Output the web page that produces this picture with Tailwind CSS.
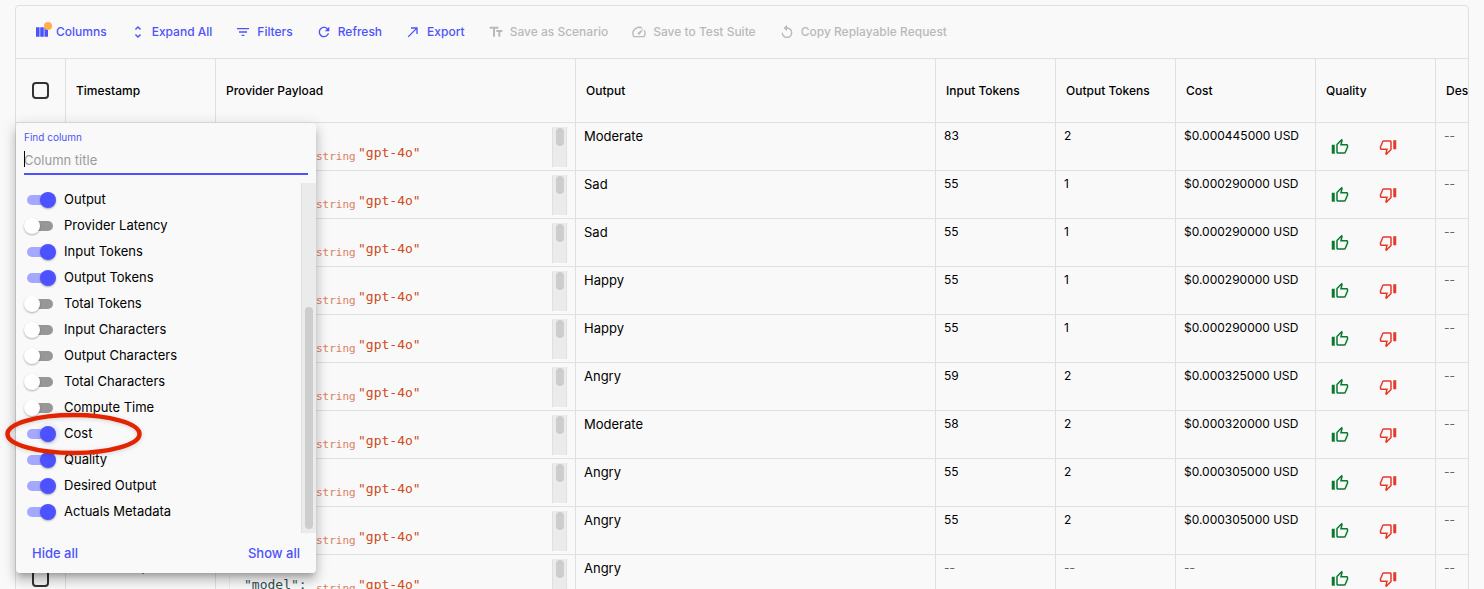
<!DOCTYPE html>
<html lang="en">
<head>
  <meta charset="UTF-8" />
  <meta name="viewport" content="width=device-width, initial-scale=1" />
  <title>Inferences</title>
  <script src="https://cdn.jsdelivr.net/npm/@tailwindcss/browser@4"></script>
</head>
<body class="h-screen overflow-hidden bg-[#f9f9f9] font-[Inter,sans-serif] text-[13px] leading-5 text-black">
  <!-- icon sprite -->
  <svg class="hidden">
    <symbol id="i-columns" viewBox="0 0 24 24"><path d="M14.67 5v14H9.33V5h5.34zm1 14H21V5h-5.33v14zm-7.34 0V5H3v14h5.33z"/></symbol>
    <symbol id="i-unfold" viewBox="0 0 24 24"><path d="M12 5.83 15.17 9l1.41-1.41L12 3 7.41 7.59 8.83 9 12 5.83zm0 12.34L8.83 15l-1.41 1.41L12 21l4.59-4.59L15.17 15 12 18.17z"/></symbol>
    <symbol id="i-filter" viewBox="0 0 24 24"><path d="M10 18h4v-2h-4v2zM3 6v2h18V6H3zm3 7h12v-2H6v2z"/></symbol>
    <symbol id="i-refresh" viewBox="0 0 24 24"><path d="M17.65 6.35C16.2 4.9 14.21 4 12 4c-4.42 0-7.99 3.58-7.99 8s3.57 8 7.99 8c3.73 0 6.84-2.55 7.73-6h-2.08c-.82 2.33-3.04 4-5.65 4-3.31 0-6-2.69-6-6s2.69-6 6-6c1.66 0 3.14.69 4.22 1.78L13 11h7V4l-2.35 2.35z"/></symbol>
    <symbol id="i-export" viewBox="0 0 24 24"><path d="M9 5v2h6.59L4 18.59 5.41 20 17 8.41V15h2V5z"/></symbol>
    <symbol id="i-text" viewBox="0 0 24 24"><path d="M2.5 4v3h5v12h3V7h5V4h-13zm19 5h-9v3h3v7h3v-7h3V9z"/></symbol>
    <symbol id="i-speed" viewBox="0 0 24 24"><path d="m20.38 8.57-1.23 1.85a8 8 0 0 1-.22 7.58H5.07A8 8 0 0 1 15.58 6.85l1.85-1.23A10 10 0 0 0 3.35 19a2 2 0 0 0 1.72 1h13.85a2 2 0 0 0 1.74-1 10 10 0 0 0-.27-10.44zm-9.79 6.84a2 2 0 0 0 2.83 0l5.66-8.49-8.49 5.66a2 2 0 0 0 0 2.83z"/></symbol>
    <symbol id="i-replay" viewBox="0 0 24 24"><path d="M12 5V1L7 6l5 5V7c3.31 0 6 2.69 6 6s-2.69 6-6 6-6-2.69-6-6H4c0 4.42 3.58 8 8 8s8-3.58 8-8-3.58-8-8-8z"/></symbol>
    <symbol id="i-up" viewBox="0 0 24 24"><path d="M9 21h9c.83 0 1.54-.5 1.84-1.22l3.02-7.05c.09-.23.14-.47.14-.73v-2c0-1.1-.9-2-2-2h-6.31l.95-4.57.03-.32c0-.41-.17-.79-.44-1.06L14.17 1 7.58 7.59C7.22 7.95 7 8.45 7 9v10c0 1.1.9 2 2 2zM9 9l4.34-4.34L12 10h9v2l-3 7H9V9zM1 9h4v12H1z"/></symbol>
    <symbol id="i-down" viewBox="0 0 24 24"><path d="M15 3H6c-.83 0-1.54.5-1.84 1.22l-3.02 7.05c-.09.23-.14.47-.14.73v2c0 1.1.9 2 2 2h6.31l-.95 4.57-.03.32c0 .41.17.79.44 1.06L9.83 23l6.59-6.59c.36-.36.58-.86.58-1.41V5c0-1.1-.9-2-2-2zm0 12-4.34 4.34L12 14H3v-2l3-7h9v10zm4-12h4v12h-4z"/></symbol>
  </svg>

  <main class="relative mt-[5px] mr-[15px] ml-[15px]">
    <div class="overflow-hidden rounded border border-[#e0e0e0]">
      <div class="flex h-[53px] items-center gap-[23px] border-b border-[#e0e0e0] pl-[18px] text-xs whitespace-nowrap text-[#4d53fa]">
        <button class="flex items-center gap-1.5 font-medium">
          <span class="relative">
            <svg class="size-4 fill-current"><use href="#i-columns"/></svg>
            <span class="absolute -top-0.5 -right-0.5 size-2 rounded-full bg-[#ffb04c]"></span>
          </span>
          Columns
        </button>
        <button class="flex items-center gap-1.5 font-medium"><svg class="size-4 fill-current"><use href="#i-unfold"/></svg>Expand All</button>
        <button class="flex items-center gap-1.5 font-medium"><svg class="size-4 fill-current"><use href="#i-filter"/></svg>Filters</button>
        <button class="flex items-center gap-1.5 font-medium"><svg class="size-4 fill-current"><use href="#i-refresh"/></svg>Refresh</button>
        <button class="flex items-center gap-1.5 font-medium"><svg class="size-4 fill-current"><use href="#i-export"/></svg>Export</button>
        <button disabled class="flex items-center gap-1.5 font-medium text-[#b9b9b9]"><svg class="size-4 fill-current"><use href="#i-text"/></svg>Save as Scenario</button>
        <button disabled class="flex items-center gap-1.5 font-medium text-[#b9b9b9]"><svg class="size-4 fill-current"><use href="#i-speed"/></svg>Save to Test Suite</button>
        <button disabled class="flex items-center gap-1.5 font-medium text-[#b9b9b9]"><svg class="size-4 fill-current"><use href="#i-replay"/></svg>Copy Replayable Request</button>
      </div>

      <table class="w-[1620px] table-fixed border-separate border-spacing-0 text-left">
        <colgroup>
          <col class="w-[50px]" /><col class="w-[150px]" /><col class="w-[360px]" /><col class="w-[360px]" />
          <col class="w-[120px]" /><col class="w-[120px]" /><col class="w-[140px]" /><col class="w-[120px]" /><col />
        </colgroup>
        <thead>
          <tr class="h-16 *:border-r *:border-b *:border-[#e0e0e0] *:px-2.5 *:text-xs *:font-medium">
            <th><input type="checkbox" aria-label="Select all" class="ml-1.5 block size-[17px] appearance-none rounded-sm border-2 border-[#333]" /></th>
            <th>Timestamp</th>
            <th>Provider Payload</th>
            <th>Output</th>
            <th>Input Tokens</th>
            <th>Output Tokens</th>
            <th>Cost</th>
            <th>Quality</th>
            <th>Desired Output</th>
          </tr>
        </thead>
        <tbody id="rows"></tbody>
      </table>
    </div>

    <!-- column picker -->
    <section class="absolute top-[118px] left-px w-[300px] rounded bg-[#f9f9f9] shadow-[0_5px_5px_-3px_rgba(0,0,0,0.2),0_8px_10px_1px_rgba(0,0,0,0.14),0_3px_14px_2px_rgba(0,0,0,0.12)]">
      <div class="px-2 pt-2">
        <label for="find" class="block text-[10px] leading-3 text-[#4d53fa]">Find column</label>
        <div class="relative">
          <input id="find" type="text" placeholder="Column title" class="block h-8 w-full border-b-2 border-[#4d53fa] pt-1 caret-transparent outline-none placeholder:text-[#9b9b9b]" />
          <span class="absolute top-2 left-0 h-4 w-px bg-black"></span>
        </div>
      </div>
      <div class="mt-2 flex h-[350px]">
        <div id="columns" class="flex-1 pt-1 pl-2"></div>
        <div class="w-[15px] border-l border-[#e0e0e0] bg-[#ebebeb] pt-[124px]">
          <div class="mx-auto h-[222px] w-2 rounded-full bg-[#cdcdcd]"></div>
        </div>
      </div>
      <div class="flex h-10 items-center justify-between px-4 font-medium text-[#4d53fa]">
        <button>Hide all</button>
        <button>Show all</button>
      </div>
    </section>

    <!-- highlight around the Cost switch -->
    <svg class="pointer-events-none absolute top-[404px] -left-[13px] h-[50px] w-[144px] drop-shadow-sm" viewBox="0 0 144 50">
      <ellipse cx="71.5" cy="25" rx="66" ry="19" fill="none" stroke="#e32400" stroke-width="4.5"/>
    </svg>
  </main>

  <script>
    const rows = [
      ['Moderate', '83', '2', '$0.000445000 USD'],
      ['Sad', '55', '1', '$0.000290000 USD'],
      ['Sad', '55', '1', '$0.000290000 USD'],
      ['Happy', '55', '1', '$0.000290000 USD'],
      ['Happy', '55', '1', '$0.000290000 USD'],
      ['Angry', '59', '2', '$0.000325000 USD'],
      ['Moderate', '58', '2', '$0.000320000 USD'],
      ['Angry', '55', '2', '$0.000305000 USD'],
      ['Angry', '55', '2', '$0.000305000 USD'],
      ['Angry', '--', '--', '--'],
    ];

    const columns = [
      ['Output', true],
      ['Provider Latency', false],
      ['Input Tokens', true],
      ['Output Tokens', true],
      ['Total Tokens', false],
      ['Input Characters', false],
      ['Output Characters', false],
      ['Total Characters', false],
      ['Compute Time', false],
      ['Cost', true],
      ['Quality', true],
      ['Desired Output', true],
      ['Actuals Metadata', true],
    ];

    // Missing values are drawn in grey
    const value = (v) => v === '--' ? '<span class="text-[#666]">--</span>' : v;

    document.getElementById('rows').innerHTML = rows.map(([output, input, out, cost]) => `
      <tr class="h-12 *:h-12 *:border-r *:border-b *:border-[#e0e0e0] *:px-2 *:py-0 *:align-top">
        <td><input type="checkbox" aria-label="Select row" class="mt-[15px] ml-2 block size-[17px] appearance-none rounded-sm border-2 border-[#333]" /></td>
        <td class="text-xs"><div class="pt-[5px]">2024-09-13, 4:28</div></td>
        <td>
          <div class="mt-1 flex h-10 overflow-hidden font-['DejaVu_Sans_Mono',monospace]">
            <div class="flex-1 pl-[5px]">
              <div class="h-4 pl-2 leading-4 text-[#2f4f4f]">{</div>
              <div class="flex items-baseline border-l border-[#ebebeb] pl-3.5 leading-5">
                <span class="w-[72px] text-[#2f4f4f]">"model":</span>
                <span class="relative top-[3px] w-[42px] text-[11px] text-[#dc7f5b]">string</span>
                <span class="text-[#cb4b16]">"gpt-4o"</span>
              </div>
            </div>
            <div class="w-[15px] border-x border-[#e0e0e0] bg-[#ebebeb] pt-px"><div class="mx-auto h-[18px] w-2 rounded-full bg-[#cdcdcd]"></div></div>
          </div>
        </td>
        <td><div class="pt-[3px]">${output}</div></td>
        <td class="text-xs"><div class="pt-[3px] leading-5">${value(input)}</div></td>
        <td class="text-xs"><div class="pt-[3px] leading-5">${value(out)}</div></td>
        <td class="text-xs"><div class="pt-[3px] leading-5">${value(cost)}</div></td>
        <td>
          <div class="flex gap-[30px] pt-[15px] pl-[7px]">
            <button aria-label="Good"><svg class="size-[18px] fill-[#0a7a2c]"><use href="#i-up"/></svg></button>
            <button aria-label="Bad"><svg class="size-[18px] fill-[#e53a2b]"><use href="#i-down"/></svg></button>
          </div>
        </td>
        <td class="text-xs"><div class="pt-[3px] leading-5">${value('--')}</div></td>
      </tr>`).join('');

    document.getElementById('columns').innerHTML = columns.map(([name, on]) => `
      <label class="flex h-[26px] items-center gap-[11px] pl-[3px]">
        <input type="checkbox" role="switch" ${on ? 'checked' : ''} class="relative h-2.5 w-[26px] appearance-none rounded-full bg-[#979797] before:absolute before:-top-[3px] before:-left-[3px] before:size-4 before:rounded-full before:bg-white before:shadow-[0_1px_2px_rgba(0,0,0,0.3)] checked:bg-[#a5a8ff] checked:before:left-[13px] checked:before:bg-[#4c52ff] ${name === 'Cost' ? 'before:ring-4 before:ring-[#4c52ff]/5' : ''}" />
        <span class="pb-0.5">${name}</span>
      </label>`).join('');
  </script>
</body>
</html>
